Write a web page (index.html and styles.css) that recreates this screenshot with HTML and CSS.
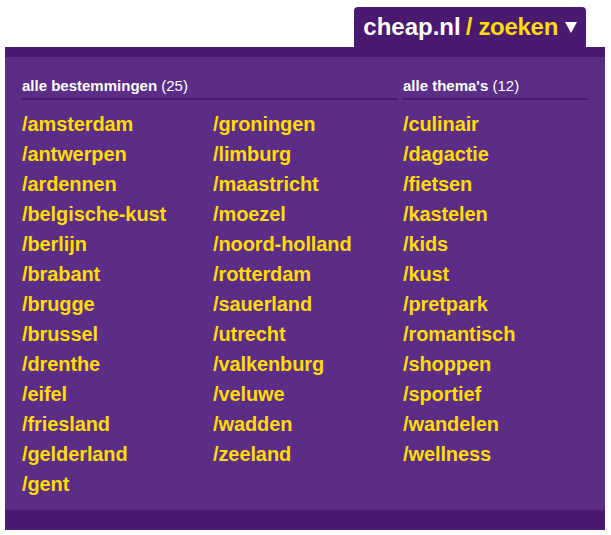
FILE: index.html
```html
<!DOCTYPE html>
<html lang="nl">
<head>
    <meta charset="UTF-8">
    <meta name="viewport" content="width=device-width, initial-scale=1.0">
    <title>cheap.nl - zoeken</title>
    <link rel="stylesheet" href="styles.css">
</head>
<body>
    <div class="menu">
        <div class="menu-top">
            <div class="tab">
                <span class="brand">cheap.nl</span>
                <span class="search">/ zoeken</span>
                <svg class="arrow" width="12" height="11" viewBox="0 0 12 11"><path d="M0 0 H12 L6 11 Z" fill="#fff"/></svg>
            </div>
        </div>

        <div class="panel">
            <div class="group group-places">
                <h3>alle bestemmingen <span>(25)</span></h3>
                <div class="lists">
                    <ul>
                        <li><a href="#">/amsterdam</a></li>
                        <li><a href="#">/antwerpen</a></li>
                        <li><a href="#">/ardennen</a></li>
                        <li><a href="#">/belgische-kust</a></li>
                        <li><a href="#">/berlijn</a></li>
                        <li><a href="#">/brabant</a></li>
                        <li><a href="#">/brugge</a></li>
                        <li><a href="#">/brussel</a></li>
                        <li><a href="#">/drenthe</a></li>
                        <li><a href="#">/eifel</a></li>
                        <li><a href="#">/friesland</a></li>
                        <li><a href="#">/gelderland</a></li>
                        <li><a href="#">/gent</a></li>
                    </ul>
                    <ul>
                        <li><a href="#">/groningen</a></li>
                        <li><a href="#">/limburg</a></li>
                        <li><a href="#">/maastricht</a></li>
                        <li><a href="#">/moezel</a></li>
                        <li><a href="#">/noord-holland</a></li>
                        <li><a href="#">/rotterdam</a></li>
                        <li><a href="#">/sauerland</a></li>
                        <li><a href="#">/utrecht</a></li>
                        <li><a href="#">/valkenburg</a></li>
                        <li><a href="#">/veluwe</a></li>
                        <li><a href="#">/wadden</a></li>
                        <li><a href="#">/zeeland</a></li>
                    </ul>
                </div>
            </div>

            <div class="group group-themes">
                <h3>alle thema's <span>(12)</span></h3>
                <div class="lists">
                    <ul>
                        <li><a href="#">/culinair</a></li>
                        <li><a href="#">/dagactie</a></li>
                        <li><a href="#">/fietsen</a></li>
                        <li><a href="#">/kastelen</a></li>
                        <li><a href="#">/kids</a></li>
                        <li><a href="#">/kust</a></li>
                        <li><a href="#">/pretpark</a></li>
                        <li><a href="#">/romantisch</a></li>
                        <li><a href="#">/shoppen</a></li>
                        <li><a href="#">/sportief</a></li>
                        <li><a href="#">/wandelen</a></li>
                        <li><a href="#">/wellness</a></li>
                    </ul>
                </div>
            </div>
        </div>

        <div class="panel-foot"></div>
    </div>
</body>
</html>
```

FILE: styles.css
```css
body {
    margin: 0;
    background: #fff;
    font-family: 'Liberation Sans', Arial, sans-serif;
}

.menu {
    width: 600px;
    margin-left: 5px;
}

.menu-top {
    display: flex;
    justify-content: flex-end;
    padding-top: 7px;
    padding-right: 19px;
}

.tab {
    display: flex;
    align-items: center;
    height: 40px;
    padding: 0 9px;
    background: #4a1a70;
    border-radius: 4px 4px 0 0;
    font-size: 24px;
    font-weight: bold;
    line-height: 40px;
}

.brand {
    color: #fff;
}

.search {
    color: #ffdd00;
    margin-left: 5px;
    letter-spacing: -0.3px;
}

.arrow {
    margin-left: 7px;
    margin-top: 1px;
}

.panel {
    display: flex;
    gap: 5px;
    background: #5b2d86;
    border-top: 10px solid #4a1a70;
    padding: 20px 17px 11px;
}

.group-places {
    width: 376px;
    flex-shrink: 0;
}

.group-themes {
    flex: 1;
    min-width: 0;
}

h3 {
    margin: 0 0 9px;
    padding-bottom: 3px;
    border-bottom: 2px solid #4a1a70;
    color: #fff;
    font-size: 15px;
    line-height: 18px;
}

h3 span {
    font-weight: normal;
}

.lists {
    display: flex;
}

ul {
    list-style: none;
    margin: 0;
    padding: 0;
    width: 191px;
    flex-shrink: 0;
}

li {
    height: 30px;
    line-height: 30px;
}

a {
    color: #ffdd00;
    font-size: 20px;
    font-weight: bold;
    text-decoration: none;
    letter-spacing: -0.1px;
}

.panel-foot {
    height: 20px;
    background: #4a1a70;
}
```
